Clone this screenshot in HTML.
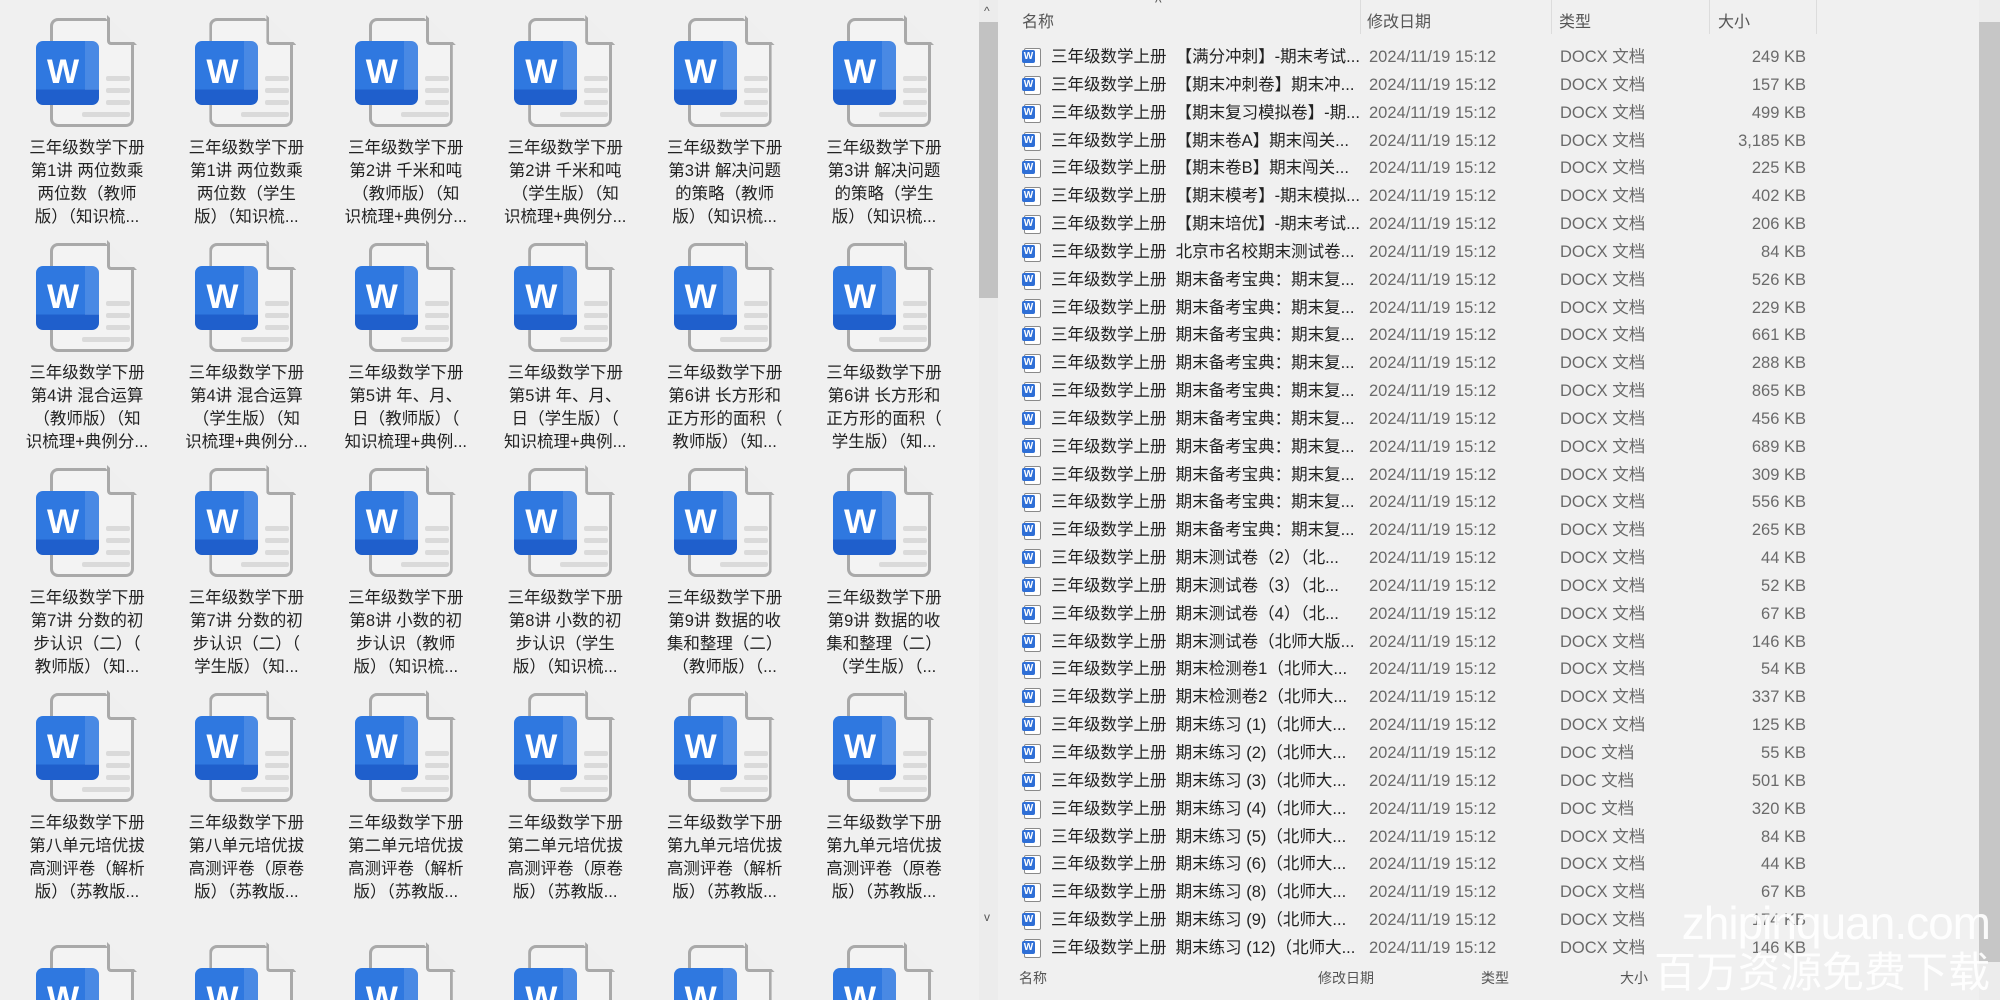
<!DOCTYPE html>
<html style="height:1000px;overflow:hidden"><head><meta charset="utf-8"><style>
*{margin:0;padding:0;box-sizing:border-box}
body{width:2000px;height:1000px;overflow:hidden;background:#f0f0f0;font-family:"Liberation Sans","Noto Sans CJK SC",sans-serif;position:relative}
#grid{position:absolute;left:0;top:0;width:979px;height:1000px;overflow:hidden}
.pg{position:absolute;width:84px;height:109px;border:3px solid #a9a9a9;border-radius:8px;background:#f3f3f3;clip-path:polygon(0 0,66% 0,100% 25%,100% 100%,0 100%)}
.fold{position:absolute;width:30px;height:30px;border-left:3px solid #a9a9a9;border-bottom:3px solid #a9a9a9;border-radius:0 0 0 4px;background:#efefef}
.ln{position:absolute;height:5px;background:#dadada;border-radius:2px}
.bl{position:absolute;width:63px;height:64px;border-radius:7px;background:linear-gradient(#2f78e0 0 76%,#1f5fcc 76%);color:#fff;font:bold 34px "Liberation Sans",sans-serif;padding:12px 0 0 11px}
.bl:after{content:"";position:absolute;right:0;top:0;width:14px;height:49px;background:rgba(255,255,255,.13);border-radius:0 7px 0 0}
.tx{position:absolute;width:150px;text-align:center;font-size:16.5px;line-height:23px;color:#222}
.lsb{position:absolute;left:979px;top:0;width:19px;height:1000px;background:#ececec}
.hd{position:absolute;font-size:16px;color:#555}
.row{position:absolute;left:1000px;width:980px;height:28px;font-size:16.5px;line-height:28px}
.row span{position:absolute;white-space:nowrap}
.ic{position:absolute;left:24px;top:5px;width:17px;height:19px;border:1.5px solid #8a8a8a;border-radius:2px;background:#fff}
.ic:before{content:"W";position:absolute;left:-3px;top:1px;width:13px;height:13px;background:#2f6fd6;color:#fff;font:bold 10px/13px "Liberation Sans",sans-serif;text-align:center;border-radius:2px}
.sep{position:absolute;top:0;width:1px;height:34px;background:#dcdcdc}
</style></head><body>
<div id="grid"></div>
<div class="lsb"><div style="position:absolute;left:0;top:22px;width:19px;height:276px;background:#c2c2c2"></div><div style="position:absolute;left:5px;top:4px;font-size:12px;color:#555">^</div><div style="position:absolute;left:5px;top:910px;font-size:12px;color:#555">v</div></div>
<div class="sep" style="left:1360px"></div><div class="sep" style="left:1551px"></div><div class="sep" style="left:1709px"></div><div class="sep" style="left:1816px"></div>
<div class="hd" style="left:1022px;top:8px">名称</div>
<div class="hd" style="left:1155px;top:-6px;font-size:14px">^</div>
<div class="hd" style="left:1367px;top:8px">修改日期</div>
<div class="hd" style="left:1559px;top:8px">类型</div>
<div class="hd" style="left:1718px;top:8px">大小</div>
<div id="list"></div>
<div style="position:absolute;left:1000px;top:962px;width:980px;height:38px;background:#f0f0f0"></div>
<div class="hd" style="left:1019px;top:968px;font-size:14px">名称</div>
<div class="hd" style="left:1318px;top:968px;font-size:14px">修改日期</div>
<div class="hd" style="left:1481px;top:968px;font-size:14px">类型</div>
<div class="hd" style="left:1620px;top:968px;font-size:14px">大小</div>
<div style="position:absolute;left:1979px;top:0;width:21px;height:1000px;background:#ececec"><div style="position:absolute;left:0;top:22px;width:21px;height:940px;background:#c6c6c6"></div></div>
<div style="position:absolute;left:1380px;top:896px;width:610px;text-align:right;font-size:46px;line-height:54px;color:rgba(255,255,255,.9);letter-spacing:-1px">zhipinquan.com</div>
<div style="position:absolute;left:1380px;top:948px;width:610px;text-align:right;font-size:42px;line-height:50px;color:rgba(255,255,255,.9)">百万资源免费下载</div>
<script>
var T=[["三年级数学下册","第1讲 两位数乘","两位数（教师","版）（知识梳..."],["三年级数学下册","第1讲 两位数乘","两位数（学生","版）（知识梳..."],["三年级数学下册","第2讲 千米和吨","（教师版）（知","识梳理+典例分..."],["三年级数学下册","第2讲 千米和吨","（学生版）（知","识梳理+典例分..."],["三年级数学下册","第3讲 解决问题","的策略（教师","版）（知识梳..."],["三年级数学下册","第3讲 解决问题","的策略（学生","版）（知识梳..."],
["三年级数学下册","第4讲 混合运算","（教师版）（知","识梳理+典例分..."],["三年级数学下册","第4讲 混合运算","（学生版）（知","识梳理+典例分..."],["三年级数学下册","第5讲 年、月、","日（教师版）（","知识梳理+典例..."],["三年级数学下册","第5讲 年、月、","日（学生版）（","知识梳理+典例..."],["三年级数学下册","第6讲 长方形和","正方形的面积（","教师版）（知..."],["三年级数学下册","第6讲 长方形和","正方形的面积（","学生版）（知..."],
["三年级数学下册","第7讲 分数的初","步认识（二）（","教师版）（知..."],["三年级数学下册","第7讲 分数的初","步认识（二）（","学生版）（知..."],["三年级数学下册","第8讲 小数的初","步认识（教师","版）（知识梳..."],["三年级数学下册","第8讲 小数的初","步认识（学生","版）（知识梳..."],["三年级数学下册","第9讲 数据的收","集和整理（二）","（教师版）（..."],["三年级数学下册","第9讲 数据的收","集和整理（二）","（学生版）（..."],
["三年级数学下册","第八单元培优拔","高测评卷（解析","版）（苏教版..."],["三年级数学下册","第八单元培优拔","高测评卷（原卷","版）（苏教版..."],["三年级数学下册","第二单元培优拔","高测评卷（解析","版）（苏教版..."],["三年级数学下册","第二单元培优拔","高测评卷（原卷","版）（苏教版..."],["三年级数学下册","第九单元培优拔","高测评卷（解析","版）（苏教版..."],["三年级数学下册","第九单元培优拔","高测评卷（原卷","版）（苏教版..."]];
var h="";
for(var r=0;r<5;r++)for(var c=0;c<6;c++){var cx=84+c*159.4,y=[18,243,468,693,945][r];
h+='<div class="pg" style="left:'+(cx-34)+'px;top:'+y+'px"></div><div class="fold" style="left:'+(cx+23)+'px;top:'+(y-3)+'px;clip-path:polygon(0 0,100% 100%,0 100%)"></div>';
for(var k=0;k<4;k++)h+='<div class="ln" style="left:'+(cx+(k==3?-2:22))+'px;top:'+(y+58+k*12)+'px;width:'+(k==3?48:24)+'px"></div>';
h+='<div class="bl" style="left:'+(cx-48)+'px;top:'+(y+23)+'px">W</div>';
if(r<4){var t=T[r*6+c];h+='<div class="tx" style="left:'+(cx-72)+'px;top:'+(y+119)+'px">'+t.join('<br>')+'</div>';}}
document.getElementById('grid').innerHTML=h;
var N=[["【满分冲刺】-期末考试...","DOCX","249"],["【期末冲刺卷】期末冲...","DOCX","157"],["【期末复习模拟卷】-期...","DOCX","499"],["【期末卷A】期末闯关...","DOCX","3,185"],["【期末卷B】期末闯关...","DOCX","225"],["【期末模考】-期末模拟...","DOCX","402"],["【期末培优】-期末考试...","DOCX","206"],["北京市名校期末测试卷...","DOCX","84"],["期末备考宝典：期末复...","DOCX","526"],["期末备考宝典：期末复...","DOCX","229"],["期末备考宝典：期末复...","DOCX","661"],["期末备考宝典：期末复...","DOCX","288"],["期末备考宝典：期末复...","DOCX","865"],["期末备考宝典：期末复...","DOCX","456"],["期末备考宝典：期末复...","DOCX","689"],["期末备考宝典：期末复...","DOCX","309"],["期末备考宝典：期末复...","DOCX","556"],["期末备考宝典：期末复...","DOCX","265"],["期末测试卷（2）（北...","DOCX","44"],["期末测试卷（3）（北...","DOCX","52"],["期末测试卷（4）（北...","DOCX","67"],["期末测试卷（北师大版...","DOCX","146"],["期末检测卷1（北师大...","DOCX","54"],["期末检测卷2（北师大...","DOCX","337"],["期末练习 (1)（北师大...","DOCX","125"],["期末练习 (2)（北师大...","DOC","55"],["期末练习 (3)（北师大...","DOC","501"],["期末练习 (4)（北师大...","DOC","320"],["期末练习 (5)（北师大...","DOCX","84"],["期末练习 (6)（北师大...","DOCX","44"],["期末练习 (8)（北师大...","DOCX","67"],["期末练习 (9)（北师大...","DOCX","174"],["期末练习 (12)（北师大...","DOCX","146"]];
h="";for(var i=0;i<N.length;i++){var y=43+i*27.84;
h+='<div class="row" style="top:'+y+'px"><div class="ic"></div><span style="left:51px;color:#222">三年级数学上册 &nbsp;'+N[i][0]+'</span><span style="left:369px;color:#6a6a6a">2024/11/19 15:12</span><span style="left:560px;color:#6a6a6a">'+N[i][1]+' 文档</span><span style="right:174px;color:#6a6a6a">'+N[i][2]+' KB</span></div>';}
document.getElementById('list').innerHTML=h;
</script>
</body></html>
